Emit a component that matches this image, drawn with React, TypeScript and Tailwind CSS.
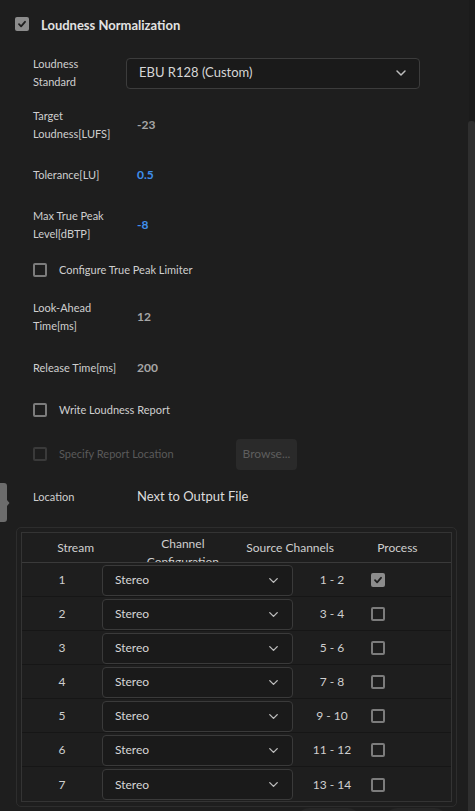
import { ChevronDown } from 'lucide-react'

const rows = [
  { n: 1, src: '1 - 2', on: true },
  { n: 2, src: '3 - 4', on: false },
  { n: 3, src: '5 - 6', on: false },
  { n: 4, src: '7 - 8', on: false },
  { n: 5, src: '9 - 10', on: false },
  { n: 6, src: '11 - 12', on: false },
  { n: 7, src: '13 - 14', on: false },
]

function Check({ on, disabled }: { on?: boolean; disabled?: boolean }) {
  if (on) {
    return (
      <span className="w-[14px] h-[14px] rounded-[2px] bg-[#8c8c8c] flex items-center justify-center shrink-0">
        <svg width="10" height="10" viewBox="0 0 10 10">
          <path d="M2 5.2 L4.1 7.3 L8 2.8" fill="none" stroke="#1e1e1e" strokeWidth="1.8" strokeLinecap="round" strokeLinejoin="round" />
        </svg>
      </span>
    )
  }
  return (
    <span
      className={`w-[14px] h-[14px] rounded-[2px] border-2 shrink-0 ${disabled ? 'border-[#3a3a3a]' : 'border-[#7c7c7c]'}`}
    />
  )
}

function Label({ children }: { children: React.ReactNode }) {
  return <div className="w-[104px] shrink-0 text-[11px] leading-[18px] text-[#cfcfcf]">{children}</div>
}

function CheckRow({ label, disabled, h }: { label: string; disabled?: boolean; h: string }) {
  return (
    <div className={`flex items-center gap-[12px] pl-[33px] ${h}`}>
      <Check disabled={disabled} />
      <span className={`text-[11px] ${disabled ? 'text-[#5a5a5a]' : 'text-[#cfcfcf]'}`}>{label}</span>
    </div>
  )
}

export default function App() {
  return (
    <div className="relative w-[475px] h-[811px] overflow-hidden bg-[#1e1e1e] font-['Lato',sans-serif]">
      {/* scrollbar */}
      <div className="absolute right-0 top-0 w-[6px] h-[121px] bg-[#1b1b1b]" />
      <div className="absolute right-0 top-[121px] bottom-0 w-[7px] rounded-t-[3px] bg-[#2f2f2f]" />

      {/* side tab */}
      <svg className="absolute left-0 top-[483px]" width="10" height="39" viewBox="0 0 10 39">
        <path d="M0 0 H4 Q7 0 7 3 V17 L9.5 20 L7 23 V36 Q7 39 4 39 H0 Z" fill="#6c6c6c" />
      </svg>

      <div className="flex items-center gap-[12px] pl-[15px] h-[48px]">
        <Check on />
        <span className="pt-[3px] text-[13px] font-bold text-[#e2e2e2]">Loudness Normalization</span>
      </div>

      <div className="flex items-center pl-[33px] h-[50px]">
        <Label>
          Loudness
          <br />
          Standard
        </Label>
        <div className="ml-[-11px] w-[294px] h-[31px] rounded-[4px] border border-[#3c3c3c] bg-[#1a1a1a] flex items-center justify-between pl-[12px] pr-[10px]">
          <span className="text-[13px] text-[#d6d6d6]">EBU R128 (Custom)</span>
          <ChevronDown size={16} strokeWidth={2.2} className="text-[#bdbdbd]" />
        </div>
      </div>

      <div className="flex items-center pl-[33px] h-[54px]">
        <Label>
          Target
          <br />
          Loudness[LUFS]
        </Label>
        <span className="text-[12px] font-bold text-[#a6a6a6]">-23</span>
      </div>

      <div className="flex items-center pl-[33px] h-[44px] pt-[1px]">
        <Label>Tolerance[LU]</Label>
        <span className="text-[12px] font-bold text-[#3f8fec]">0.5</span>
      </div>

      <div className="flex items-center pl-[33px] h-[58px]">
        <Label>
          Max True Peak
          <br />
          Level[dBTP]
        </Label>
        <span className="text-[12px] font-bold text-[#3f8fec]">-8</span>
      </div>

      <CheckRow label="Configure True Peak Limiter" h="h-[32px]" />

      <div className="flex items-center pl-[33px] h-[62px]">
        <Label>
          Look-Ahead
          <br />
          Time[ms]
        </Label>
        <span className="text-[12px] font-bold text-[#a6a6a6]">12</span>
      </div>

      <div className="flex items-center pl-[33px] h-[38px] pt-[1px]">
        <Label>Release Time[ms]</Label>
        <span className="text-[12px] font-bold text-[#a6a6a6]">200</span>
      </div>

      <CheckRow label="Write Loudness Report" h="h-[48px]" />

      <div className="flex items-center pl-[33px] h-[40px]">
        <Check disabled />
        <span className="ml-[12px] text-[11px] text-[#5a5a5a]">Specify Report Location</span>
        <button className="ml-auto mr-[178px] w-[61px] h-[31px] rounded-[4px] bg-[#2a2a2a] text-[12px] text-[#5e5e5e]">
          Browse...
        </button>
      </div>

      <div className="flex items-center pl-[33px] h-[46px]">
        <Label>Location</Label>
        <span className="text-[13px] text-[#dcdcdc]">Next to Output File</span>
      </div>

      <div className="ml-[16px] mt-[7px] w-[441px] rounded-[5px] border border-[#2d2d2d] p-[4px]">
        <div className="border border-[#343434]">
          <div className="grid grid-cols-4 h-[30px] border-b border-[#3a3a3a] text-[12px] text-[#cfcfcf] text-center overflow-hidden">
            <div className="leading-[30px]">Stream</div>
            <div className="leading-[18px] pt-[2px]">
              Channel
              <br />
              Configuration
            </div>
            <div className="leading-[30px]">Source Channels</div>
            <div className="leading-[30px]">Process</div>
          </div>
          {rows.map(r => (
            <div key={r.n} className="flex items-center h-[34px] pt-[1px] border-b border-[#161616] last:border-b-0 text-[12px] text-[#cfcfcf]">
              <div className="w-[80px] text-center">{r.n}</div>
              <div className="w-[191px] h-[31px] rounded-[4px] border border-[#3a3a3a] bg-[#1a1a1a] flex items-center justify-between pl-[12px] pr-[11px]">
                <span className="text-[12px] text-[#d6d6d6]">Stereo</span>
                <ChevronDown size={15} strokeWidth={2.2} className="text-[#bdbdbd]" />
              </div>
              <div className="w-[78px] text-center">{r.src}</div>
              <Check on={r.on} />
            </div>
          ))}
        </div>
      </div>

      <div className="flex gap-[25px] pl-[297px] mt-[1px]">
        <div className="w-[63px] h-[24px] rounded-[12px] bg-[#262626]" />
        <div className="w-[62px] h-[24px] rounded-[12px] bg-[#262626]" />
      </div>
    </div>
  )
}
